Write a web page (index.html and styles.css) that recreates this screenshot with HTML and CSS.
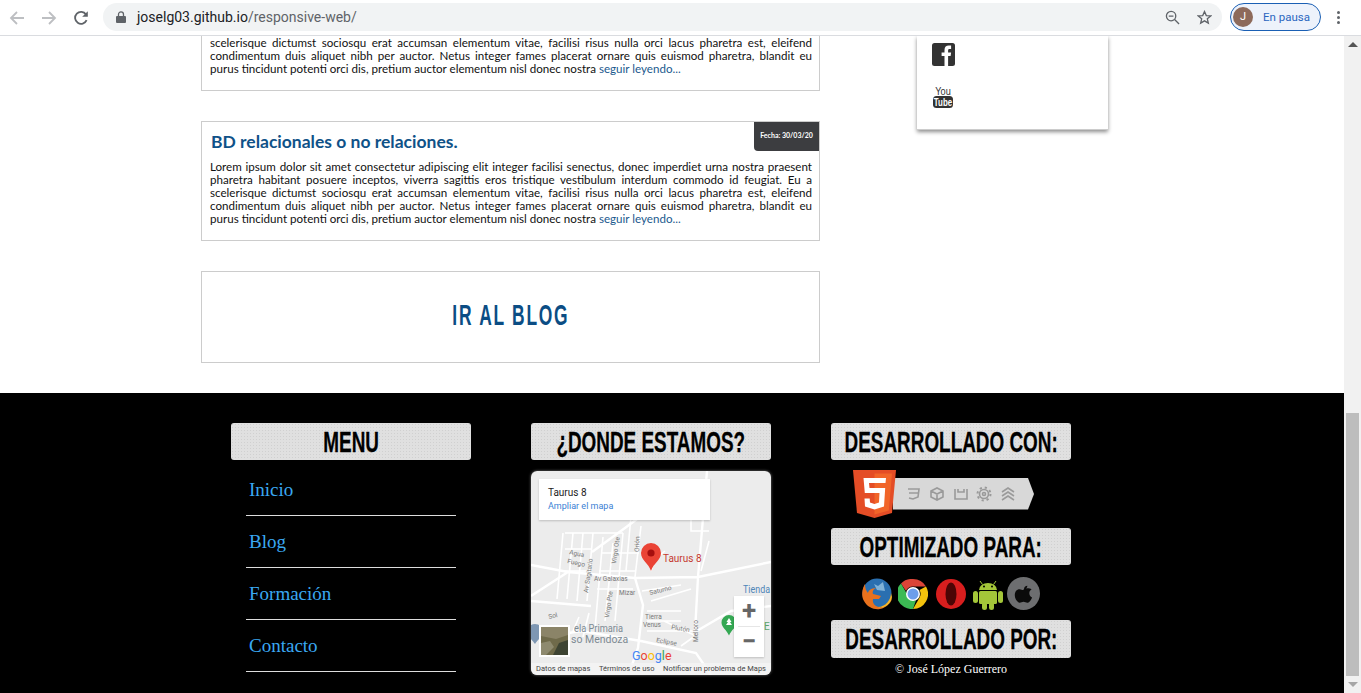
FILE: index.html
```html
<!DOCTYPE html>
<html lang="es">
<head>
  <meta charset="UTF-8">
  <title>Responsive Web</title>
  <link rel="stylesheet" href="styles.css">
</head>
<body>

  <header class="toolbar">
    <svg class="nav-icon" viewBox="0 0 16 16"><path class="stroke-off" d="M15 8H2M8 2L2 8l6 6"/></svg>
    <svg class="nav-icon" viewBox="0 0 16 16"><path class="stroke-off" d="M1 8h13M8 2l6 6-6 6"/></svg>
    <svg class="nav-icon nav-reload" viewBox="0 0 16 16"><path class="stroke-on" d="M13.6 10.2A6 6 0 1 1 13 4.4"/><path class="fill-on" d="M14.8 1.2v5.6H9.2z"/></svg>
    <div class="omnibox">
      <svg class="lock" viewBox="0 0 10 12"><path d="M1 5h8a1 1 0 0 1 1 1v5a1 1 0 0 1-1 1H1a1 1 0 0 1-1-1V6a1 1 0 0 1 1-1z"/><path class="lock-bow" d="M2.5 5V3.4a2.5 2.5 0 0 1 5 0V5"/></svg>
      <span class="url">joselg03.github.io<span class="url-path">/responsive-web/</span></span>
      <svg class="omni-icon omni-zoom" viewBox="0 0 16 16"><circle cx="6.5" cy="6.5" r="5"/><path d="M10.2 10.2L15 15M4 6.5h5"/></svg>
      <svg class="omni-icon" viewBox="0 0 16 16"><path d="M8 1.6l1.9 4.3 4.7.4-3.6 3.1 1.1 4.6L8 11.6 3.9 14l1.1-4.6-3.6-3.1 4.7-.4z"/></svg>
    </div>
    <div class="profile">
      <span class="avatar">J</span>
      <span>En pausa</span>
    </div>
    <div class="kebab"><i></i><i></i><i></i></div>
  </header>

  <div class="window">
    <div class="page">
      <div class="content">
        <main class="posts">

          <article class="card card-cut">
            <p class="post-text">
              <span class="line">scelerisque dictumst sociosqu erat accumsan elementum vitae, facilisi risus nulla orci lacus pharetra est, eleifend</span>
              <span class="line">condimentum duis aliquet nibh per auctor. Netus integer fames placerat ornare quis euismod pharetra, blandit eu</span>
              <span class="line-end">purus tincidunt potenti orci dis, pretium auctor elementum nisl donec nostra <a href="#">seguir leyendo...</a></span>
            </p>
          </article>

          <article class="card">
            <span class="date">Fecha: 30/03/20</span>
            <h2 class="post-title">BD relacionales o no relaciones.</h2>
            <p class="post-text">
              <span class="line">Lorem ipsum dolor sit amet consectetur adipiscing elit integer facilisi senectus, donec imperdiet urna nostra praesent</span>
              <span class="line">pharetra habitant posuere inceptos, viverra sagittis eros tristique vestibulum interdum commodo id feugiat. Eu a</span>
              <span class="line">scelerisque dictumst sociosqu erat accumsan elementum vitae, facilisi risus nulla orci lacus pharetra est, eleifend</span>
              <span class="line">condimentum duis aliquet nibh per auctor. Netus integer fames placerat ornare quis euismod pharetra, blandit eu</span>
              <span class="line-end">purus tincidunt potenti orci dis, pretium auctor elementum nisl donec nostra <a href="#">seguir leyendo...</a></span>
            </p>
          </article>

          <a class="card blog-link" href="#"><span>IR AL BLOG</span></a>
        </main>

        <aside class="social">
          <svg class="fb" viewBox="0 0 23 23"><rect width="23" height="23" rx="2.5"/><path d="M12.5 23V13H9.6V9.4h2.9V7c0-3 1.7-4.4 4.3-4.4h2.3v3.5h-1.6c-1.1 0-1.4.6-1.4 1.5v1.8h3l-.5 3.6h-2.5v10z"/></svg>
          <svg class="yt" viewBox="0 0 20 24">
            <text class="yt-you" transform="translate(10 10.5) scale(.8 1)">You</text>
            <rect y="12" width="20" height="12" rx="3.5"/>
            <text class="yt-tube" transform="translate(10 22) scale(.72 1)">Tube</text>
          </svg>
        </aside>
      </div>

      <footer class="footer">
        <section class="col">
          <h3 class="bar"><span>MENU</span></h3>
          <ul class="menu">
            <li><a href="#">Inicio</a></li>
            <li><a href="#">Blog</a></li>
            <li><a href="#">Formación</a></li>
            <li><a href="#">Contacto</a></li>
          </ul>
        </section>

        <section class="col">
          <h3 class="bar"><span>¿DONDE ESTAMOS?</span></h3>
          <div class="map">
            <svg class="map-art" viewBox="0 0 240 204">
              <rect width="240" height="204" fill="#ececec"/>
              <path class="road-thick" d="M0 94L37 101 104 107 167 106 240 91M176 0L167 106 164 161M104 107L112 134 107 177 101 194M61 81L94 57 106 48M0 130L60 135M37 101L0 125M0 168L50 160 110 170 165 182 180 204M164 161L200 140 240 135"/>
              <path class="road" d="M34 62H60L92 62M32 62L26 128M42 62L36 128M52 62L46 130M62 62L56 130M72 66L64 158M82 72L74 150M92 62L84 150M34 78H60M30 100H58M70 82H108M68 100H104M66 118H102M100 45L95 100M110 55L104 106M120 100L124 88 134 80M48 146L42 160M58 142L52 166M116 140H150M116 150H150M116 160H165M120 130L160 118M150 175L164 165M160 30V60L178 60M178 70L170 100M133 150L165 165M111 120L150 114"/>
              <g class="map-label">
                <text x="38" y="83" transform="rotate(12 38 83)">Agua</text>
                <text x="36" y="92" transform="rotate(12 36 92)">Fuego</text>
                <text x="57" y="122" transform="rotate(-82 57 122)">Av Sagitario</text>
                <text x="85" y="93" transform="rotate(-82 85 93)">Virgo Ote</text>
                <text x="108" y="81" transform="rotate(-88 108 81)">Orión</text>
                <text x="78" y="147" transform="rotate(-82 78 147)">Virgo Pte</text>
                <text x="63" y="110">Av Galaxias</text>
                <text x="88" y="124">Mizar</text>
                <text x="119" y="124" transform="rotate(-14 119 124)">Saturno</text>
                <text x="114" y="148">Tierra</text>
                <text x="112" y="156">Venus</text>
                <text x="140" y="158" transform="rotate(10 140 158)">Plutón</text>
                <text x="125" y="171" transform="rotate(10 125 171)">Eclipse</text>
                <text x="167" y="171" transform="rotate(-90 167 171)">Melioro</text>
                <text x="18" y="148" transform="rotate(-14 18 148)">Sol</text>
              </g>
              <text class="map-school" transform="translate(43 161) scale(.88 1)">ela Primaria</text>
              <text class="map-school" x="40" y="172">so Mendoza</text>
              <text class="map-shop" transform="translate(212 122) scale(.85 1)">Tienda</text>
              <text class="map-green" x="233" y="159">E</text>
              <text class="map-pin-label" x="132" y="91">Taurus 8</text>
              <path d="M120 72a10 10 0 0 1 10 10c0 7-7.500 10-10 18-2.500-8-10-11-10-18a10 10 0 0 1 10-10z" fill="#ea4335"/>
              <circle cx="120" cy="82" r="3.600" fill="#a50e0e"/>
              <path d="M198 144a7.500 7.500 0 0 1 7.500 7.500c0 5-5 7-7.500 13-2.500-6-7.500-8-7.500-13a7.500 7.500 0 0 1 7.500-7.500z" fill="#34a853"/>
              <path d="M198 147l2.500 4h-1.500l2 3h-6l2-3h-1.500z" fill="#fff"/>
              <path d="M4 153a8 8 0 0 1 8 8c0 5-5 7-8 12-3-5-8-7-8-12a8 8 0 0 1 8-8z" fill="#7e97b3"/>
              <rect x="8" y="154" width="31" height="32" fill="#fff"/>
              <rect x="10" y="156" width="27" height="28" fill="#6f6a4a"/>
              <path d="M10 156h27v8l-12 4-15-3z" fill="#8b8468"/>
              <path d="M22 184l6-12 9-3v15z" fill="#3e4433"/>
              <path d="M10 172l9-2 4 6-8 8h-5z" fill="#8e8a6f"/>
              <text class="map-google" x="101" y="189"><tspan fill="#4285f4">G</tspan><tspan fill="#ea4335">o</tspan><tspan fill="#fbbc05">o</tspan><tspan fill="#4285f4">g</tspan><tspan fill="#34a853">l</tspan><tspan fill="#ea4335">e</tspan></text>
            </svg>
            <div class="info-window">
              <strong>Taurus 8</strong>
              <a href="#">Ampliar el mapa</a>
            </div>
            <div class="zoom-ctrl">
              <span class="zoom-btn">+</span>
              <span class="zoom-btn">−</span>
            </div>
            <div class="map-credits">
              <span>Datos de mapas</span>
              <span>Términos de uso</span>
              <span>Notificar un problema de Maps</span>
            </div>
          </div>
        </section>

        <section class="col">
          <h3 class="bar"><span>DESARROLLADO CON:</span></h3>
          <svg class="html5" viewBox="0 0 181 48">
            <path d="M40 8H175L181 24 175 39.500H40z" fill="#d8d8d8"/>
            <path d="M0 0H43L39 43 21.500 48 4 43z" fill="#e44d26"/>
            <path d="M21.500 3.500H39L35.800 40.500 21.500 44.500z" fill="#f16529"/>
            <path d="M33 8H10.500L11.800 23H26.500L26 32.500 21.500 34 17 32.500 16.700 28.500H11.500L12 36.500 21.500 39.500 31 36.500 32.200 18H16.500L16 13H32.500z" fill="#fff"/>
            <g class="html5-icons">
              <path d="M55 19h11l-1 8-5 2-4-1M56 23h9"/>
              <path d="M78 21l6-3 6 3v6l-6 3-6-3zM78 21l6 3 6-3M84 24v6"/>
              <path d="M102 19v10h12v-10M105 19v3h6v-3"/>
              <circle cx="131" cy="24" r="4.500"/>
              <circle class="gear-teeth" cx="131" cy="24" r="6.500"/>
              <circle cx="131" cy="24" r="1.500"/>
              <path d="M149 22l6-4 6 4M149 26l6-4 6 4M149 30l6-4 6 4"/>
            </g>
          </svg>
          <h3 class="bar bar-mid"><span>OPTIMIZADO PARA:</span></h3>
          <div class="browsers">
            <svg class="browser-firefox" viewBox="0 0 33 33">
              <circle cx="17" cy="16" r="14.500" fill="#2a6fb0"/>
              <path d="M23 5l-5 4-4-2 3 6 8 1z" fill="#7fb2d8"/>
              <path d="M5 7c-3 5-4 12-1 17 3 6 10 9 16 8 6-1 11-6 12-12 0 5-4 9-9 10-7 1-11-3-10-8h6l2-3-8-2c-1-3 1-5 3-6-5 0-8 3-8 5-2-2-3-5-3-9z" fill="#e8711d"/>
              <path d="M31 16c0 7-6 14-13 14 4 2 13-1 14-10z" fill="#f6b62b"/>
            </svg>
            <svg class="browser-round" viewBox="0 0 30 30">
              <path d="M15 0a15 15 0 0 1 13 7.500H15A7.500 7.500 0 0 0 8 12L3 4.500A15 15 0 0 1 15 0z" fill="#db4437"/>
              <path d="M28 7.500A15 15 0 0 1 15 30l6.500-11.300A7.500 7.500 0 0 0 21.500 11z" fill="#f4c20d"/>
              <path d="M3 4.500L9 15a7.500 7.500 0 0 0 9 6.300L15 30A15 15 0 0 1 3 4.500z" fill="#3cba54"/>
              <circle cx="15" cy="15" r="7" fill="#fff"/>
              <circle cx="15" cy="15" r="5.500" fill="#6d9eeb"/>
            </svg>
            <svg class="browser-round" viewBox="0 0 30 30">
              <circle cx="15" cy="15" r="15" fill="#d81e1e"/>
              <ellipse cx="15" cy="15" rx="5.500" ry="11.500" fill="#4c0505"/>
            </svg>
            <svg class="browser-android" viewBox="0 0 30 32">
              <path d="M7 3l2.500 3.500M23 3l-2.500 3.500" stroke="#a4c639" fill="none"/>
              <path d="M6 12a9 7 0 0 1 18 0z" fill="#a4c639"/>
              <rect x="6" y="13" width="18" height="13" rx="1.500" fill="#a4c639"/>
              <rect x="0" y="13" width="5" height="12" rx="2.500" fill="#a4c639"/>
              <rect x="25" y="13" width="5" height="12" rx="2.500" fill="#a4c639"/>
              <rect x="9" y="24" width="5" height="8" rx="2.500" fill="#a4c639"/>
              <rect x="16" y="24" width="5" height="8" rx="2.500" fill="#a4c639"/>
              <circle cx="11" cy="8.500" r="1" fill="#000"/>
              <circle cx="19" cy="8.500" r="1" fill="#000"/>
            </svg>
            <svg class="browser-apple" viewBox="0 0 34 34">
              <circle cx="17" cy="17" r="17" fill="#6d6e70"/>
              <path d="M21 9c-2 0-3.500 1.500-3.500 3.500 2 0 3.500-1.500 3.500-3.500zM17 13.500c-1.500 0-2.500-1-4-1-3 0-5 2.500-5 6 0 4 3 8 5 8 1.500 0 2.500-1 4-1s2.500 1 4 1c2 0 4-3 4.800-5.500-3.500-1.500-3.800-6.500-.5-8-1-1.500-2.800-1.500-4.300-1.500-1.500 0-3 1-4 1z" fill="#0b0b0b"/>
            </svg>
          </div>
          <h3 class="bar bar-tall"><span>DESARROLLADO POR:</span></h3>
          <p class="copy">© José López Guerrero</p>
        </section>
      </footer>
    </div>

    <div class="scrollbar">
      <div class="arrow arrow-up"></div>
      <div class="thumb"></div>
      <div class="arrow arrow-down"></div>
    </div>
  </div>

</body>
</html>
```

FILE: styles.css
```css
html, body {
  margin: 0;
  height: 693px;
  overflow: hidden;
  background-color: #fff;
}
body {
  font-family: "Liberation Sans", Arial, sans-serif;
}

/* browser bar */
.toolbar {
  display: flex;
  align-items: center;
  height: 35px;
  border-bottom: 1px solid #dadce0;
  padding-left: 9px;
  background-color: #fff;
}
.nav-icon {
  width: 16px;
  height: 16px;
  margin-right: 16px;
}
.nav-reload {
  margin-right: 14px;
}
.stroke-off {
  fill: none;
  stroke: #bdbfc2;
  stroke-width: 1.8;
}
.stroke-on {
  fill: none;
  stroke: #5f6368;
  stroke-width: 1.8;
}
.fill-on {
  fill: #5f6368;
}
.omnibox {
  display: flex;
  align-items: center;
  width: 1119px;
  height: 28px;
  margin-top: -1px;
  border-radius: 14px;
  background-color: #f1f3f4;
  box-sizing: border-box;
  padding: 0 10px 0 13px;
}
.lock {
  width: 10px;
  height: 12px;
  fill: #5f6368;
  margin-right: 11px;
}
.lock-bow {
  fill: none;
  stroke: #5f6368;
  stroke-width: 1.3;
}
.url {
  flex: 1;
  font-family: Roboto, sans-serif;
  font-size: 14px;
  color: #202124;
}
.url-path {
  color: #5f6368;
}
.omni-icon {
  width: 15px;
  height: 15px;
  fill: none;
  stroke: #5f6368;
  stroke-width: 1.4;
  margin-left: 17px;
}
.profile {
  display: flex;
  align-items: center;
  gap: 10px;
  width: 91px;
  height: 28px;
  margin-top: -1px;
  margin-left: 8px;
  box-sizing: border-box;
  padding-left: 2px;
  border: 1px solid #1a5fb4;
  border-radius: 14px;
  background-color: #edf2fb;
  font-family: Roboto, sans-serif;
  font-size: 11.5px;
  color: #2b66c0;
}
.avatar {
  width: 20px;
  height: 20px;
  border-radius: 50%;
  background-color: #8d6a5b;
  color: #fff;
  font-size: 11px;
  line-height: 20px;
  text-align: center;
}
.kebab {
  display: flex;
  flex-direction: column;
  gap: 2px;
  margin-left: 16px;
}
.kebab i {
  width: 3px;
  height: 3px;
  border-radius: 50%;
  background-color: #5f6368;
}

.window {
  display: flex;
  height: 657px;
}
.page {
  width: 1344px;
  overflow: hidden;
}
.content {
  display: flex;
  align-items: flex-start;
  height: 357px;
}

/* posts */
.posts {
  display: flex;
  flex-direction: column;
  gap: 30px;
  width: 619px;
  margin-left: 201px;
}
.card {
  position: relative;
  display: block;
  box-sizing: border-box;
  border: 1px solid #ccc;
  padding: 0 7px 15px 8px;
  background-color: #fff;
}
.card-cut {
  border-top: 0;
}
.date {
  position: absolute;
  top: 0;
  right: 0;
  width: 65px;
  height: 29px;
  border-bottom-left-radius: 4px;
  background-color: #3c3d40;
  color: #fff;
  font-family: Lato, sans-serif;
  font-size: 7px;
  font-weight: 700;
  line-height: 27px;
  text-align: center;
}
.post-title {
  margin: 0;
  padding: 8px 0 7px 1px;
  font-family: Lato, sans-serif;
  font-size: 17.5px;
  font-weight: 700;
  line-height: 23px;
  color: #0f5288;
}
.post-text {
  margin: 0;
  font-family: Lato, sans-serif;
  font-size: 11.6px;
  line-height: 13px;
  color: #111;
}
.post-text a {
  color: #1b5a8e;
  text-decoration: none;
}
.line, .line-end {
  display: block;
  white-space: nowrap;
}
.line {
  text-align: justify;
  text-align-last: justify;
  white-space: normal;
}
.blog-link {
  height: 92px;
  padding: 0;
  text-align: center;
  text-decoration: none;
  font-size: 30px;
  font-weight: 700;
  line-height: 86px;
  letter-spacing: 3px;
  color: #0b4d84;
}
.blog-link span {
  display: inline-block;
  transform: scaleX(.58);
}

/* social box */
.social {
  display: flex;
  flex-direction: column;
  gap: 18px;
  box-sizing: border-box;
  width: 191px;
  height: 94px;
  margin-left: 97px;
  padding: 7px 0 0 15px;
  background-color: #fff;
  border-bottom: 1px solid #ccc;
  box-shadow: 0 2px 4px rgba(0, 0, 0, .45);
}
.fb {
  width: 23px;
  height: 23px;
}
.fb rect {
  fill: #333;
}
.fb path {
  fill: #fff;
}
.yt {
  width: 20px;
  height: 24px;
  margin-left: 1px;
}
.yt rect {
  fill: #333;
}
.yt text {
  text-anchor: middle;
}
.yt-you {
  font-size: 11.5px;
  fill: #333;
}
.yt-tube {
  font-size: 11px;
  font-weight: 700;
  fill: #fff;
}

/* footer */
.footer {
  display: flex;
  gap: 60px;
  box-sizing: border-box;
  height: 300px;
  padding: 30px 0 0 231px;
  background-color: #000;
}
.col {
  width: 240px;
}
.bar {
  display: flex;
  justify-content: center;
  height: 37px;
  margin: 0;
  border-radius: 3px;
  background-color: #e0e0e0;
  background-image: radial-gradient(#d0d0d0 .7px, transparent .9px);
  background-size: 3px 3px;
  font-size: 30px;
  font-weight: 700;
  line-height: 37px;
  white-space: nowrap;
  color: #000;
}
.bar span {
  display: block;
  flex: none;
  transform: scaleX(.63);
  -webkit-text-stroke: .3px #000;
}
.bar-mid {
  margin-top: 10px;
}
.bar-tall {
  height: 38px;
  margin-top: 10px;
}

.menu {
  list-style: none;
  width: 210px;
  margin: 4px 0 0 15px;
  padding: 0;
}
.menu li {
  height: 51px;
  padding-left: 3px;
  border-bottom: 1px solid #ddd;
  font-family: "Liberation Serif", serif;
  font-size: 19px;
  line-height: 52px;
}
.menu a {
  color: #3aa8f2;
  text-decoration: none;
}

/* map */
.map {
  position: relative;
  width: 240px;
  height: 204px;
  margin-top: 11px;
  border-radius: 6px;
  overflow: hidden;
  box-shadow: 0 0 3px #777;
  font-family: Roboto, sans-serif;
}
.map-art {
  display: block;
  width: 240px;
  height: 204px;
}
.road-thick {
  fill: none;
  stroke: #fff;
  stroke-width: 2.4;
}
.road {
  fill: none;
  stroke: #fff;
  stroke-width: 1.6;
}
.map-label text {
  font-size: 6.5px;
  fill: #777;
}
.map-school {
  font-size: 10.5px;
  fill: #7d8a93;
}
.map-shop {
  font-size: 10.5px;
  fill: #4f86b8;
}
.map-green {
  font-size: 10px;
  fill: #5aa469;
}
.map-pin-label {
  font-size: 10px;
  fill: #c5392f;
}
.map-google {
  font-size: 12.5px;
  font-weight: 400;
}
.info-window {
  position: absolute;
  top: 8px;
  left: 8px;
  box-sizing: border-box;
  width: 171px;
  height: 41px;
  padding: 7px 9px;
  background-color: #fff;
  box-shadow: 0 1px 2px rgba(0, 0, 0, .2);
}
.info-window strong {
  display: block;
  font-size: 10px;
  font-weight: 400;
  line-height: 13px;
  color: #222;
}
.info-window a {
  display: block;
  margin-top: 2px;
  font-size: 9px;
  line-height: 11px;
  text-decoration: none;
  color: #3b7fd4;
}
.zoom-ctrl {
  position: absolute;
  top: 125px;
  left: 203px;
  display: flex;
  flex-direction: column;
  width: 30px;
  height: 61px;
  background-color: #fff;
  box-shadow: 0 1px 2px rgba(0, 0, 0, .2);
}
.zoom-btn {
  flex: 1;
  font-size: 26px;
  font-weight: 700;
  line-height: 29px;
  text-align: center;
  color: #666;
}
.zoom-btn + .zoom-btn {
  margin: 0 4px;
  border-top: 1px solid #e6e6e6;
}
.map-credits {
  position: absolute;
  left: 0;
  right: 0;
  bottom: 0;
  display: flex;
  justify-content: space-between;
  box-sizing: border-box;
  height: 12px;
  padding: 0 5px;
  background-color: rgba(245, 245, 245, .8);
  font-size: 7.5px;
  line-height: 12px;
  color: #444;
}

/* right column */
.html5 {
  display: block;
  width: 181px;
  height: 48px;
  margin: 10px 0 0 22px;
}
.html5-icons {
  fill: none;
  stroke: #9a9a9a;
  stroke-width: 1.6;
}
.gear-teeth {
  stroke-width: 2;
  stroke-dasharray: 2.2 2.9;
}
.browsers {
  display: flex;
  align-items: center;
  gap: 5px;
  height: 33px;
  margin: 12px 0 0 29px;
}
.browser-firefox, .browser-apple {
  width: 33px;
  height: 33px;
}
.browser-round {
  width: 30px;
  height: 30px;
  margin-right: 3px;
}
.browser-android {
  width: 30px;
  height: 32px;
  margin: 0 -1px;
}
.copy {
  margin: 4px 0 0;
  font-family: "Liberation Serif", serif;
  font-size: 12px;
  line-height: 14px;
  text-align: center;
  color: #fff;
}

/* fake scrollbar */
.scrollbar {
  display: flex;
  flex-direction: column;
  align-items: center;
  width: 17px;
  background-color: #f1f1f1;
}
.arrow {
  width: 0;
  height: 0;
  border-left: 5px solid transparent;
  border-right: 5px solid transparent;
}
.arrow-up {
  margin-top: 6px;
  border-bottom: 5px solid #555;
}
.thumb {
  width: 13px;
  height: 263px;
  margin-top: 366px;
  background-color: #bdbdbd;
}
.arrow-down {
  margin-top: 6px;
  border-top: 5px solid #a6a6a6;
}
```
